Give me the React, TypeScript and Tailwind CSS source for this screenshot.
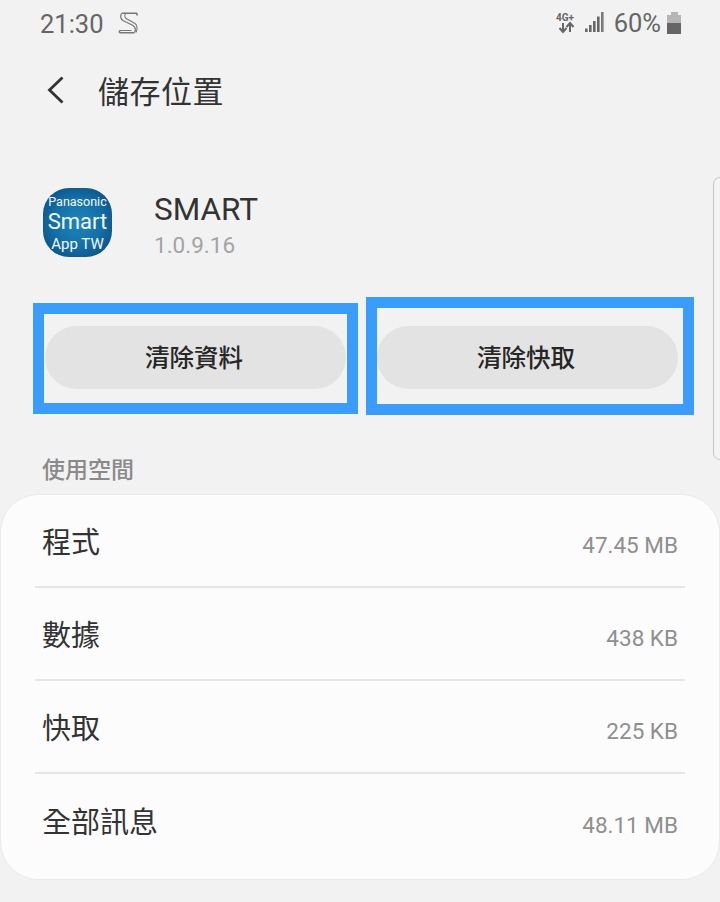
const latin = "font-['Roboto','Noto_Sans_CJK_TC',sans-serif]";
const cjk = "font-['Noto_Sans_CJK_TC','Roboto',sans-serif]";

const rows = [
  { label: "程式", value: "47.45 MB" },
  { label: "數據", value: "438 KB" },
  { label: "快取", value: "225 KB" },
  { label: "全部訊息", value: "48.11 MB" },
];

function SamsungS() {
  return (
    <svg width="20" height="22" viewBox="0 0 20 22" fill="none" stroke="#777777" className="ml-[14px]">
      <path d="M19 1.2H3.5M19 1.2v2.2M1.5 20.8H16.5M1.5 20.8v-2.4" strokeWidth="1.6" />
      <path d="M3.5 1.5C2 4 2.5 7 5 8.5l10 5c2.5 1.5 3 5 1.5 7" strokeWidth="1.3" />
      <path d="M7.5 1.5C6 4 7 6 9 7l8 4.5c2.5 1.5 2.5 6 1 9" strokeWidth="1.1" />
      <path d="M1.5 18.5h12" strokeWidth="1" />
    </svg>
  );
}

function SignalIcons() {
  return (
    <svg width="48" height="24" viewBox="0 0 48 24" className="text-[#666666]">
      <text x="0" y="9.5" fontSize="10" fontWeight="700" fontFamily="Roboto, sans-serif" fill="currentColor">4G+</text>
      <path d="M7 12v8.5M3.5 17l3.5 4 3.5-4M14 21v-8.5M10.5 16l3.500-4 3.500 4" fill="none" stroke="currentColor" strokeWidth="2" />
      <rect x="29" y="17.500" width="2.600" height="3.500" fill="currentColor" />
      <rect x="33" y="14" width="2.600" height="7" fill="currentColor" />
      <rect x="37" y="10" width="2.600" height="11" fill="currentColor" />
      <rect x="41" y="5.500" width="2.600" height="15.500" fill="currentColor" />
      <rect x="45" y="1" width="2.600" height="20" fill="currentColor" opacity="0.85" />
    </svg>
  );
}

function AppIcon() {
  return (
    <div className={`flex h-[69px] w-[69px] flex-col items-center justify-center rounded-[26px] bg-[radial-gradient(circle_at_50%_50%,#1f86b8_0%,#136fa6_50%,#0a4377_100%)] pt-[2px] text-[#f4fbff] ${latin}`}>
      <span className="text-[12.5px] leading-[15px]">Panasonic</span>
      <span className="text-[22px] leading-[26px]">Smart</span>
      <span className="text-[15px] leading-[18px]">App TW</span>
    </div>
  );
}

function ActionButton({ label, className = "" }: { label: string; className?: string }) {
  return (
    <button className={`flex h-[63px] w-[301px] items-center justify-center rounded-full bg-[#e3e3e3] pr-[3px] text-[24.5px] font-medium text-[#262626] ${cjk} ${className}`}>
      {label}
    </button>
  );
}

export default function App() {
  return (
    <div className="relative h-[902px] w-[720px] overflow-hidden bg-[#f2f2f2]">
      {/* Status bar */}
      <div className="flex h-[46px] items-center justify-between pl-[40px] pr-[39px] text-[#666666]">
        <div className="flex items-center">
          <span className={`pt-[2px] text-[25.5px] ${latin}`}>21:30</span>
          <SamsungS />
        </div>
        <div className="flex items-center">
          <SignalIcons />
          <span className={`ml-[10px] text-[25.5px] ${latin}`}>60%</span>
          <div className="ml-[6px] flex w-[14px] flex-col items-center">
            <div className="h-[3px] w-[7px] bg-[#b5b5b5]" />
            <div className="h-[8px] w-[14px] bg-[#b5b5b5]" />
            <div className="h-[11px] w-[14px] bg-[#666666]" />
          </div>
        </div>
      </div>

      {/* Header */}
      <div className="mt-[22px] flex h-[44px] items-center pl-[47px]">
        <svg width="17" height="28" viewBox="0 0 17 28" fill="none" stroke="#333333" strokeWidth="2.800">
          <path d="M15.500 1.500 2.500 14l13 12.500" />
        </svg>
        <h1 className={`ml-[34px] text-[31px] tracking-[0.5px] text-[#333333] ${cjk}`}>儲存位置</h1>
      </div>

      {/* App info */}
      <div className="mt-[76px] flex h-[69px] items-start pl-[43px]">
        <AppIcon />
        <div className="ml-[42px] mt-[3px] flex flex-col">
          <span className={`text-[31.5px] leading-[38px] text-[#333333] ${latin}`}>SMART</span>
          <span className={`text-[22.5px] leading-[33px] text-[#a3a3a3] ${latin}`}>1.0.9.16</span>
        </div>
      </div>

      {/* Actions */}
      <div className="mt-[69px] flex pl-[45px]">
        <ActionButton label="清除資料" />
        <ActionButton label="清除快取" className="ml-[31px]" />
      </div>

      {/* Section */}
      <h2 className={`ml-[42px] mt-[62px] text-[23px] font-medium leading-[34px] text-[#8a8a8a] ${cjk}`}>使用空間</h2>

      <div className="mt-[9px] h-[386px] rounded-[38px] border border-[#e9e9e9] bg-[#fcfcfc] px-[34px]">
        {rows.map((row, i) => (
          <div
            key={row.label}
            className={`flex h-[93px] items-center justify-between pl-[7px] pr-[7px] ${i < rows.length - 1 ? "border-b-2 border-[#e6e6e6]" : ""}`}
          >
            <span className={`text-[29px] text-[#333333] ${cjk}`}>{row.label}</span>
            <span className={`pt-[10px] text-[22.5px] text-[#8f8f8f] ${latin}`}>{row.value}</span>
          </div>
        ))}
      </div>

      {/* Annotation boxes drawn over the screenshot */}
      <div className="absolute left-[33px] top-[303px] h-[111px] w-[325px] border-[11px] border-[#3a9cfb]" />
      <div className="absolute left-[366px] top-[297px] h-[118px] w-[328px] border-[11px] border-[#3a9cfb]" />

      {/* Scroll handle */}
      <div className="absolute left-[713px] top-[177px] h-[283px] w-[14px] rounded-[8px] border border-[#c4c4c4] bg-[#f4f4f4]" />
    </div>
  );
}
